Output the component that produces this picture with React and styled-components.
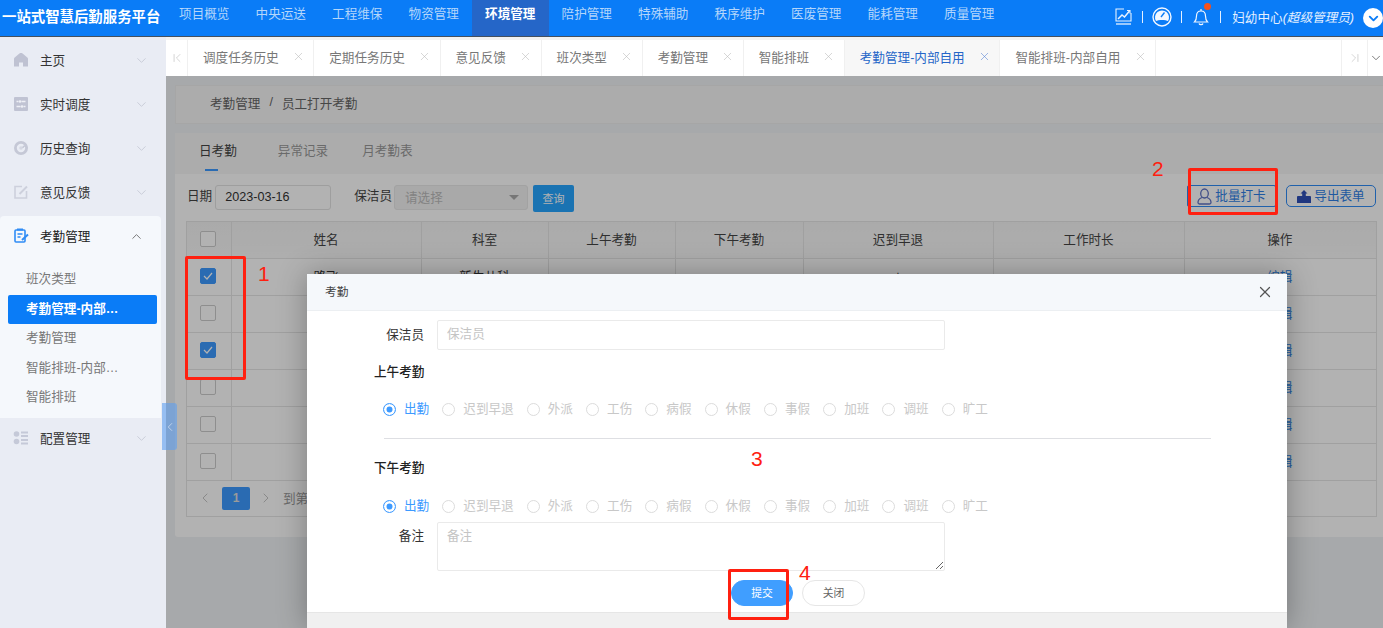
import React from 'react'
import styled, { createGlobalStyle } from 'styled-components'
import { ChevronDown, ChevronUp, ChevronLeft, ChevronRight, ChevronFirst, ChevronLast, X } from 'lucide-react'

const navItems = ['项目概览', '中央运送', '工程维保', '物资管理', '环境管理', '陪护管理', '特殊辅助', '秩序维护', '医废管理', '能耗管理', '质量管理']
const openTabs = ['调度任务历史', '定期任务历史', '意见反馈', '班次类型', '考勤管理', '智能排班', '考勤管理-内部自用', '智能排班-内部自用']
const subMenu = ['班次类型', '考勤管理-内部自用', '考勤管理', '智能排班-内部自用', '智能排班']
const columns = ['姓名', '科室', '上午考勤', '下午考勤', '迟到早退', '工作时长', '操作']
const columnWidths = [44, 190, 127, 127, 128, 190, 191, 192]
const rows = [
  { checked: true, name: '路飞', dept: '新生儿科', late: '+' },
  { checked: false },
  { checked: true },
  { checked: false },
  { checked: false },
  { checked: false },
]
const statuses = ['出勤', '迟到早退', '外派', '工伤', '病假', '休假', '事假', '加班', '调班', '旷工']

const GlobalStyle = createGlobalStyle`
  * { box-sizing: border-box; }
  body {
    margin: 0;
    font-family: "Liberation Sans", "Noto Sans CJK SC", sans-serif;
    font-size: 12.6px;
    color: #333;
  }
`

const Page = styled.div`
  position: relative;
  width: 1383px;
  height: 628px;
  overflow: hidden;
  display: flex;
  flex-direction: column;
`

const TopBar = styled.header`
  display: flex;
  align-items: stretch;
  height: 37px;
  flex: none;
  background: #0a7cf7;
  border-bottom: 1px solid #44505e;
`

const Logo = styled.div`
  width: 166px;
  flex: none;
  padding-left: 2px;
  line-height: 35px;
  color: #fff;
  font-size: 14.4px;
  font-weight: 700;
  white-space: nowrap;
  overflow: hidden;
`

const TopNav = styled.nav`
  display: flex;
  flex: 1;
`

const TopNavItem = styled.a`
  width: 76.5px;
  text-align: center;
  line-height: 28px;
  color: ${p => (p.$active ? '#fff' : '#b4d6fb')};
  font-weight: ${p => (p.$active ? 700 : 400)};
  background: ${p => (p.$active ? '#2566c8' : 'transparent')};
`

const UserArea = styled.div`
  display: flex;
  align-items: center;
  color: #e4f0ff;
  padding-bottom: 3px;
`

const HeadIcon = styled.span`
  position: relative;
  display: flex;
  width: 20px;
  justify-content: center;
`

const RedDot = styled.i`
  position: absolute;
  top: -5px;
  right: 0;
  width: 7px;
  height: 7px;
  border-radius: 50%;
  background: #f4511e;
`

const Sep = styled.span`
  width: 1px;
  height: 12px;
  margin: 0 9px;
  background: #e4f0ff;
`

const UserName = styled.span`
  white-space: nowrap;
  margin: 0 9px 0 2px;
  em { font-style: italic; }
`

const UserChevron = styled.span`
  display: flex;
  align-items: center;
  justify-content: center;
  width: 20px;
  height: 20px;
  margin-top: 3px;
  border-radius: 50%;
  background: #fff;
  color: #0a7cf7;
`

const Body = styled.div`
  display: flex;
  flex: 1;
  min-height: 0;
`

const Sidebar = styled.aside`
  width: 166px;
  flex: none;
  background: #e9ecf4;
  padding-top: 1px;
`

const MenuRow = styled.div`
  display: flex;
  align-items: center;
  height: ${p => (p.$open ? 40 : 44)}px;
  padding: 0 17px 0 13px;
  color: ${p => (p.$open ? '#222' : '#333')};
  svg.lead { flex: none; margin-right: 11px; }
`

const MenuText = styled.span`
  flex: 1;
  margin-top: -2px;
`

const MenuChevron = styled.span`
  flex: none;
  display: flex;
  color: ${p => (p.$open ? '#666' : '#bfc3cf')};
`

const OpenGroup = styled.div`
  width: 161px;
  height: 202px;
  margin: 2px 0 -2px;
  background: #f5f8fc;
  border-radius: 4px 4px 0 0;
`

const SubList = styled.div`
  display: flex;
  flex-direction: column;
  padding-top: 9px;
`

const SubItem = styled.div`
  height: 29.6px;
  line-height: 28px;
  margin-left: 8px;
  width: 149px;
  padding: 0 36px 0 18px;
  border-radius: 2px;
  white-space: nowrap;
  overflow: hidden;
  text-overflow: ellipsis;
  color: ${p => (p.$active ? '#fff' : '#777')};
  font-weight: ${p => (p.$active ? 700 : 400)};
  background: ${p => (p.$active ? '#0a7cf7' : 'transparent')};
`

const Main = styled.main`
  flex: 1;
  min-width: 0;
  display: flex;
  flex-direction: column;
`

const TabStrip = styled.div`
  display: flex;
  flex: none;
  height: 39px;
  background: #fff;
  border-top: 3px solid #f2f2f2;
`

const TabArrow = styled.div`
  display: flex;
  align-items: center;
  justify-content: center;
  width: ${p => p.$width}px;
  flex: none;
  padding-bottom: 1px;
  color: #c8c8c8;
  border-right: ${p => (p.$plain ? 'none' : '1px solid #f0f0f0')};
  border-left: ${p => (p.$left ? '1px solid #f0f0f0' : 'none')};
`

const TabItem = styled.div`
  display: flex;
  align-items: center;
  flex: none;
  gap: 13.2px;
  padding: 0 8.5px 3px 15px;
  white-space: nowrap;
  color: ${p => (p.$active ? '#2566c8' : '#777')};
  background: ${p => (p.$active ? '#f7f7f7' : '#fff')};
  border-right: 1px solid #f0f0f0;
  svg { color: ${p => (p.$active ? '#5b86d6' : '#bbb')}; }
`

const TabFill = styled.div`
  flex: 1;
`

const Content = styled.div`
  position: relative;
  flex: 1;
  min-height: 0;
  background: #f0f2f5;
  padding: 9px 0 0 9px;
`

const Overlay = styled.div`
  position: absolute;
  inset: 0;
  background: rgba(0, 0, 0, 0.3);
`

const Breadcrumb = styled.div`
  display: flex;
  align-items: center;
  gap: 9px;
  height: 39px;
  padding: 0 0 5px 34px;
  background: #f7f7f7;
  border: 1px solid #eee;
  border-right: none;
  color: #666;
`

const Panel = styled.section`
  margin-top: 9px;
  height: 404px;
  background: #fff;
  border-radius: 3px 0 0 3px;
`

const PanelTabs = styled.div`
  display: flex;
  height: 41px;
  padding-left: 7px;
  background: #f7f7f7;
`

const PanelTab = styled.div`
  position: relative;
  padding: 7px 17px 0;
  color: ${p => (p.$active ? '#444' : '#999')};
  &:first-child { margin-right: 7px; }
  ${p => p.$active && `
    &::after {
      content: '';
      position: absolute;
      left: 23px;
      bottom: 3px;
      width: 13px;
      height: 2px;
      background: #3d9aff;
    }
  `}
`

const FilterRow = styled.div`
  display: flex;
  align-items: flex-start;
  height: 27px;
  margin: 11px 0 9px;
  padding: 0 7px 0 12px;
`

const FilterLabel = styled.label`
  line-height: 23px;
  margin-right: ${p => p.$gap}px;
  color: #444;
`

const DateBox = styled.input`
  width: 116px;
  height: 25px;
  padding: 0 9px 1px;
  margin-right: 23px;
  font: inherit;
  color: #333;
  border: 1px solid #e2e2e2;
  border-radius: 3px;
  background: #fff;
  outline: none;
`

const SelectBox = styled.div`
  display: flex;
  align-items: center;
  justify-content: space-between;
  width: 134px;
  height: 25px;
  padding: 0 8px 2px 10px;
  color: #bbb;
  background: #f2f2f2;
  border: 1px solid #e8e8e8;
  border-radius: 3px;
  &::after {
    content: '';
    margin-top: 2px;
    border: 5px solid transparent;
    border-top-color: #aaa;
    border-bottom: none;
  }
`

const QueryButton = styled.button`
  width: 41px;
  height: 27px;
  margin-left: 5px;
  padding: 0 0 2px;
  border: none;
  border-radius: 2px;
  font: inherit;
  font-size: 11px;
  color: #fff;
  background: #26a5ff;
`

const Spacer = styled.div`
  flex: 1;
`

const OutlineButton = styled.button`
  display: flex;
  align-items: center;
  justify-content: center;
  gap: 3px;
  width: ${p => p.$width}px;
  height: 22px;
  margin-left: ${p => p.$gap}px;
  padding: 0 0 3px;
  font: inherit;
  color: #2f7fe6;
  background: #fff;
  border: 1px solid #2f8cf5;
  border-radius: ${p => p.$radius}px;
  svg { margin-top: 3px; }
`

const TableWrap = styled.div`
  width: 1191px;
  margin-left: 11px;
  border: 1px solid #e6e6e6;
`

const Grid = styled.table`
  width: 100%;
  table-layout: fixed;
  border-collapse: collapse;
  th, td {
    height: 37px;
    padding: 0 0 2px;
    text-align: center;
    font-weight: 400;
    border: 1px solid #e6e6e6;
  }
  th { height: 36px; }
  tr > *:first-child { border-left: none; padding-right: 1px; }
  tr > *:last-child { border-right: none; padding-right: 1px; }
  tr:first-child > th { border-top: none; }
  th {
    color: #444;
    background: linear-gradient(#f4f4f4, #f9f9f9);
  }
`

const Check = styled.span`
  display: inline-flex;
  align-items: center;
  justify-content: center;
  width: 16px;
  height: 16px;
  vertical-align: middle;
  border-radius: 2px;
  color: #fff;
  background: ${p => (p.$on ? '#3d9aff' : '#fff')};
  border: 1px solid ${p => (p.$on ? '#3d9aff' : '#ccc')};
`

const EditLink = styled.a`
  color: #2a7fe0;
`

const Pager = styled.div`
  display: flex;
  align-items: center;
  height: 35px;
  padding-left: 10px;
  color: #999;
`

const PageNum = styled.span`
  width: 28px;
  height: 23px;
  margin: 0 8px 0 9px;
  line-height: 23px;
  text-align: center;
  color: #ddd;
  font-size: 12px;
  font-weight: 700;
  background: #3d9aff;
  border-radius: 2px;
`

const PagerText = styled.span`
  margin: 0 0 2px 9px;
  white-space: nowrap;
`

const Modal = styled.div`
  position: absolute;
  left: 307px;
  top: 274px;
  width: 980px;
  height: 354px;
  display: flex;
  flex-direction: column;
  background: #fff;
  box-shadow: 0 0 28px rgba(0, 0, 0, 0.3);
`

const ModalHead = styled.div`
  display: flex;
  align-items: center;
  justify-content: space-between;
  flex: none;
  height: 37px;
  padding: 0 13px 3px 18px;
  font-size: 11.7px;
  color: #444;
  background: #f5f8fb;
  border-bottom: 1px solid #eceff2;
  svg { color: #555; margin-top: 3px; }
`

const FieldRow = styled.div`
  display: flex;
  align-items: ${p => (p.$top ? 'flex-start' : 'center')};
  gap: 13px;
  margin-top: ${p => p.$mt}px;
`

const FieldLabel = styled.label`
  width: 117px;
  padding-bottom: ${p => (p.$top ? 0 : 3)}px;
  text-align: right;
  color: #333;
  line-height: ${p => (p.$top ? '28px' : 'normal')};
`

const TextInput = styled.input`
  width: 508px;
  height: 30px;
  padding: 0 9px 3px;
  font: inherit;
  border: 1px solid #eaeaea;
  border-radius: 2px;
  outline: none;
  &::placeholder { color: #c4c4c4; }
`

const NoteInput = styled.textarea`
  display: block;
  width: 508px;
  height: 49px;
  padding: 2px 9px;
  font: inherit;
  border: 1px solid #eaeaea;
  border-radius: 2px;
  outline: none;
  &::placeholder { color: #c4c4c4; }
`

const SectionTitle = styled.div`
  height: 20px;
  margin-top: ${p => p.$mt}px;
  padding-left: 67px;
  line-height: 21px;
  font-weight: 500;
  color: #222;
`

const RadioRow = styled.div`
  display: flex;
  gap: 13.1px;
  height: 20px;
  margin-top: ${p => p.$mt}px;
  padding-left: 76px;
`

const RadioItem = styled.label`
  display: flex;
  align-items: center;
  gap: 8px;
  white-space: nowrap;
  color: ${p => (p.$on ? '#3d9aff' : '#c8c8c8')};
`

const RadioText = styled.span`
  margin-top: -3px;
`

const RadioDot = styled.i`
  width: 13px;
  height: 13px;
  border-radius: 50%;
  background: #fff;
  border: 1px solid ${p => (p.$on ? '#3d9aff' : '#dcdcdc')};
  box-shadow: ${p => (p.$on ? 'inset 0 0 0 2.5px #fff, inset 0 0 0 6px #3d9aff' : 'none')};
`

const Divider = styled.hr`
  width: 827px;
  height: 1px;
  margin: 19px 0 0 77px;
  border: none;
  background: #dedfe3;
`

const ModalActions = styled.div`
  display: flex;
  gap: 9px;
  margin-top: 9px;
  padding-left: 424px;
`

const RoundButton = styled.button`
  width: ${p => p.$width}px;
  height: 26px;
  padding: 0 0 2px;
  font: inherit;
  font-size: 10.8px;
  border-radius: 13px;
  color: ${p => (p.$primary ? '#fff' : '#666')};
  background: ${p => (p.$primary ? '#409eff' : '#fff')};
  border: 1px solid ${p => (p.$primary ? '#409eff' : '#e6e6e6')};
`

const ModalFoot = styled.div`
  flex: 1;
  margin-top: 6px;
  background: #f0f0f0;
  border-top: 1px solid #e6e6e6;
`

const CollapseHandle = styled.div`
  position: absolute;
  left: 162px;
  top: 403px;
  width: 15px;
  height: 47px;
  display: flex;
  align-items: center;
  justify-content: center;
  border-radius: 0 3px 3px 0;
  background: rgba(95, 160, 240, 0.6);
  color: #c6d6ec;
`

const Mark = styled.div`
  position: absolute;
  left: ${p => p.$x}px;
  top: ${p => p.$y}px;
  width: ${p => p.$w}px;
  height: ${p => p.$h}px;
  border: 3px solid #ff2010;
  border-radius: 2px;
`

const MarkNo = styled.span`
  position: absolute;
  left: ${p => p.$x}px;
  top: ${p => p.$y}px;
  font-size: 21px;
  line-height: 24px;
  color: #ff2010;
`

const HomeIcon = () => (
  <svg className="lead" width="16" height="16" viewBox="0 0 16 16" fill="#bfc2d2">
    <path d="M8 1 C9 1 9.5 1.5 10.5 2.3 L14 5.2 C15 6 15 6.5 15 7.5 V14.5 H10 V10.5 H6 V14.5 H1 V7.5 C1 6.5 1 6 2 5.2 L5.5 2.3 C6.5 1.5 7 1 8 1 Z" />
  </svg>
)

const DispatchIcon = () => (
  <svg className="lead" width="16" height="16" viewBox="0 0 16 16">
    <rect x="1" y="1" width="14" height="14" rx="1" fill="#c0c3d3" />
    <path d="M3.5 5.5h2M8.5 5.5h4M3.5 10.5h4M10.5 10.5h2" stroke="#eef0f6" strokeWidth="1.3" />
    <circle cx="7" cy="5.5" r="1.3" fill="#eef0f6" />
    <circle cx="9" cy="10.5" r="1.3" fill="#eef0f6" />
  </svg>
)

const HistoryIcon = () => (
  <svg className="lead" width="16" height="16" viewBox="0 0 16 16" fill="none">
    <circle cx="8" cy="8" r="5.6" stroke="#c5c8d6" strokeWidth="2.8" />
    <circle cx="8" cy="8" r="1.8" fill="#d4d7e2" />
    <path d="M10 8 A2 2 0 0 1 14 8" stroke="#c5c8d6" strokeWidth="1.4" />
  </svg>
)

const FeedbackIcon = () => (
  <svg className="lead" width="16" height="16" viewBox="0 0 16 16" fill="none">
    <path d="M9 2.5H2V14h11.5V7" stroke="#cdd0dc" strokeWidth="1.6" />
    <path d="M6.5 10 L14 2.5" stroke="#cdd0dc" strokeWidth="2" />
  </svg>
)

const AttendanceIcon = () => (
  <svg className="lead" width="16" height="16" viewBox="0 0 16 16" fill="none">
    <rect x="2" y="2" width="10" height="12" rx="1" stroke="#2f8cf5" strokeWidth="1.6" />
    <path d="M4 1.5h6" stroke="#2f8cf5" strokeWidth="2" />
    <path d="M4.5 6h5M4.5 9h3" stroke="#2f8cf5" strokeWidth="1.4" />
    <path d="M9 12 L15 6.5" stroke="#2f8cf5" strokeWidth="2" />
  </svg>
)

const ConfigIcon = () => (
  <svg className="lead" width="16" height="16" viewBox="0 0 16 16" fill="#c5c9d8">
    <circle cx="3.5" cy="4" r="2.8" />
    <circle cx="3.5" cy="11.5" r="2.8" />
    <rect x="8" y="1.5" width="7" height="2" />
    <rect x="8" y="5" width="7" height="2" />
    <rect x="8" y="9" width="7" height="2" />
    <rect x="8" y="12.5" width="7" height="2" />
  </svg>
)

const ChartIcon = () => (
  <svg width="17" height="17" viewBox="0 0 17 17" fill="none" stroke="#e8f2ff" strokeWidth="1.1">
    <path d="M9 1 H1 V13 H16 V5" />
    <path d="M3 11 L7 7 L9.5 9 L14.5 3" strokeWidth="1.5" />
    <path d="M12 2.5 H15 V5.5" />
    <path d="M1 16 H16" strokeWidth="1.3" />
  </svg>
)

const GaugeIcon = () => (
  <svg width="20" height="20" viewBox="0 0 20 20" fill="none">
    <circle cx="10" cy="10" r="9" stroke="#f2f7ff" strokeWidth="1.4" />
    <path d="M4 14 A7 7 0 1 1 16 14 C14 12.5 6 12.5 4 14 Z" fill="#f2f7ff" />
    <path d="M9 10 L12.5 5.5" stroke="#0a7cf7" strokeWidth="1.4" />
  </svg>
)

const BellIcon = () => (
  <svg width="16" height="18" viewBox="0 0 16 18" fill="none" stroke="#f0f6ff" strokeWidth="1.2">
    <path d="M1.5 14 C3 12.5 3.5 11 3.5 8 C3.5 5 5 3 8 3 C11 3 12.5 5 12.5 8 C12.5 11 13 12.5 14.5 14 Z" />
    <path d="M6 15.5 C6.5 17 9.5 17 10 15.5" />
    <path d="M8 1 V3" />
  </svg>
)

const PersonIcon = () => (
  <svg width="15" height="17" viewBox="0 0 15 17" fill="none" stroke="#5f72c4" strokeWidth="1.3">
    <ellipse cx="7.5" cy="5.5" rx="3.8" ry="4.5" />
    <path d="M5 9.5 C2.5 10.5 1 12 1 14.5 C1 15.5 1.5 16 2.5 16 H12.5 C13.5 16 14 15.5 14 14.5 C14 12 12.5 10.5 10 9.5" />
  </svg>
)

const ExportIcon = () => (
  <svg width="14" height="15" viewBox="0 0 14 15" fill="#2f50b8">
    <path d="M7 1 L10.5 4.5 H8.8 V7 H13 C13.5 7 14 7.5 14 8 V14 H0 V8 C0 7.5 0.5 7 1 7 H5.2 V4.5 H3.5 Z" />
  </svg>
)

const RadioGroup = ({ mt }) => (
  <RadioRow $mt={mt}>
    {statuses.map((s, i) => (
      <RadioItem key={s} $on={i === 0}>
        <RadioDot $on={i === 0} />
        <RadioText>{s}</RadioText>
      </RadioItem>
    ))}
  </RadioRow>
)

const Menu = ({ icon, label }) => (
  <MenuRow>
    {icon}
    <MenuText>{label}</MenuText>
    <MenuChevron><ChevronDown size={15} strokeWidth={1.2} /></MenuChevron>
  </MenuRow>
)

const App = () => {
  return (
    <Page>
      <GlobalStyle />
      <TopBar>
        <Logo>一站式智慧后勤服务平台</Logo>
        <TopNav>
          {navItems.map(n => (
            <TopNavItem key={n} $active={n === '环境管理'}>{n}</TopNavItem>
          ))}
        </TopNav>
        <UserArea>
          <HeadIcon><ChartIcon /></HeadIcon>
          <Sep />
          <HeadIcon><GaugeIcon /></HeadIcon>
          <Sep />
          <HeadIcon><BellIcon /><RedDot /></HeadIcon>
          <Sep />
          <UserName>妇幼中心<em>(超级管理员)</em></UserName>
          <UserChevron><ChevronDown size={15} strokeWidth={3} /></UserChevron>
        </UserArea>
      </TopBar>

      <Body>
        <Sidebar>
          <Menu icon={<HomeIcon />} label="主页" />
          <Menu icon={<DispatchIcon />} label="实时调度" />
          <Menu icon={<HistoryIcon />} label="历史查询" />
          <Menu icon={<FeedbackIcon />} label="意见反馈" />
          <OpenGroup>
            <MenuRow $open>
              <AttendanceIcon />
              <MenuText>考勤管理</MenuText>
              <MenuChevron $open><ChevronUp size={15} strokeWidth={1.4} /></MenuChevron>
            </MenuRow>
            <SubList>
              {subMenu.map(s => (
                <SubItem key={s} $active={s === '考勤管理-内部自用'}>{s}</SubItem>
              ))}
            </SubList>
          </OpenGroup>
          <Menu icon={<ConfigIcon />} label="配置管理" />
        </Sidebar>

        <Main>
          <TabStrip>
            <TabArrow $width={22}><ChevronFirst size={14} strokeWidth={1.3} /></TabArrow>
            {openTabs.map(t => (
              <TabItem key={t} $active={t === '考勤管理-内部自用'}>
                {t}
                <X size={13} strokeWidth={1.1} />
              </TabItem>
            ))}
            <TabFill />
            <TabArrow $width={27} $left><ChevronLast size={14} strokeWidth={1.3} /></TabArrow>
            <TabArrow $width={15} $plain><ChevronDown size={14} strokeWidth={1.3} color="#555" /></TabArrow>
          </TabStrip>

          <Content>
            <Breadcrumb>
              <span>考勤管理</span>
              <span>/</span>
              <span>员工打开考勤</span>
            </Breadcrumb>
            <Panel>
              <PanelTabs>
                <PanelTab $active>日考勤</PanelTab>
                <PanelTab>异常记录</PanelTab>
                <PanelTab>月考勤表</PanelTab>
              </PanelTabs>
              <FilterRow>
                <FilterLabel $gap={3}>日期</FilterLabel>
                <DateBox readOnly value="2023-03-16" />
                <FilterLabel $gap={2}>保洁员</FilterLabel>
                <SelectBox>请选择</SelectBox>
                <QueryButton>查询</QueryButton>
                <Spacer />
                <OutlineButton $width={89} $radius={2}>
                  <PersonIcon />
                  批量打卡
                </OutlineButton>
                <OutlineButton $width={90} $gap={10} $radius={5}>
                  <ExportIcon />
                  导出表单
                </OutlineButton>
              </FilterRow>
              <TableWrap>
                <Grid>
                  <colgroup>
                    {columnWidths.map((w, i) => <col key={i} width={w} />)}
                  </colgroup>
                  <thead>
                    <tr>
                      <th><Check /></th>
                      {columns.map(c => <th key={c}>{c}</th>)}
                    </tr>
                  </thead>
                  <tbody>
                    {rows.map((r, i) => (
                      <tr key={i}>
                        <td>
                          <Check $on={r.checked}>
                            {r.checked && (
                              <svg width="10" height="8" viewBox="0 0 10 8" fill="none">
                                <path d="M1 4 L4 7 L9 1" stroke="#fff" strokeWidth="1.2" />
                              </svg>
                            )}
                          </Check>
                        </td>
                        <td>{r.name}</td>
                        <td>{r.dept}</td>
                        <td />
                        <td />
                        <td>{r.late}</td>
                        <td />
                        <td><EditLink>编辑</EditLink></td>
                      </tr>
                    ))}
                  </tbody>
                </Grid>
                <Pager>
                  <ChevronLeft size={16} strokeWidth={1.3} color="#bbb" />
                  <PageNum>1</PageNum>
                  <ChevronRight size={16} strokeWidth={1.3} color="#bbb" />
                  <PagerText>到第</PagerText>
                </Pager>
              </TableWrap>
            </Panel>
            <Overlay />
          </Content>
        </Main>
      </Body>

      <CollapseHandle><ChevronLeft size={14} strokeWidth={1.5} /></CollapseHandle>

      <Modal>
        <ModalHead>
          考勤
          <X size={18} strokeWidth={1.6} />
        </ModalHead>
        <FieldRow $mt={9}>
          <FieldLabel>保洁员</FieldLabel>
          <TextInput placeholder="保洁员" readOnly />
        </FieldRow>
        <SectionTitle $mt={12}>上午考勤</SectionTitle>
        <RadioGroup mt={17} />
        <Divider />
        <SectionTitle $mt={19}>下午考勤</SectionTitle>
        <RadioGroup mt={18} />
        <FieldRow $mt={6} $top>
          <FieldLabel $top>备注</FieldLabel>
          <NoteInput placeholder="备注" readOnly />
        </FieldRow>
        <ModalActions>
          <RoundButton $primary $width={62}>提交</RoundButton>
          <RoundButton $width={63}>关闭</RoundButton>
        </ModalActions>
        <ModalFoot />
      </Modal>

      <Mark $x={185} $y={256} $w={61} $h={124} />
      <Mark $x={1188} $y={168} $w={90} $h={47} />
      <Mark $x={728} $y={569} $w={61} $h={51} />
      <MarkNo $x={258} $y={262}>1</MarkNo>
      <MarkNo $x={1152} $y={157}>2</MarkNo>
      <MarkNo $x={751} $y={447}>3</MarkNo>
      <MarkNo $x={799} $y={561}>4</MarkNo>
    </Page>
  )
}

export default App
